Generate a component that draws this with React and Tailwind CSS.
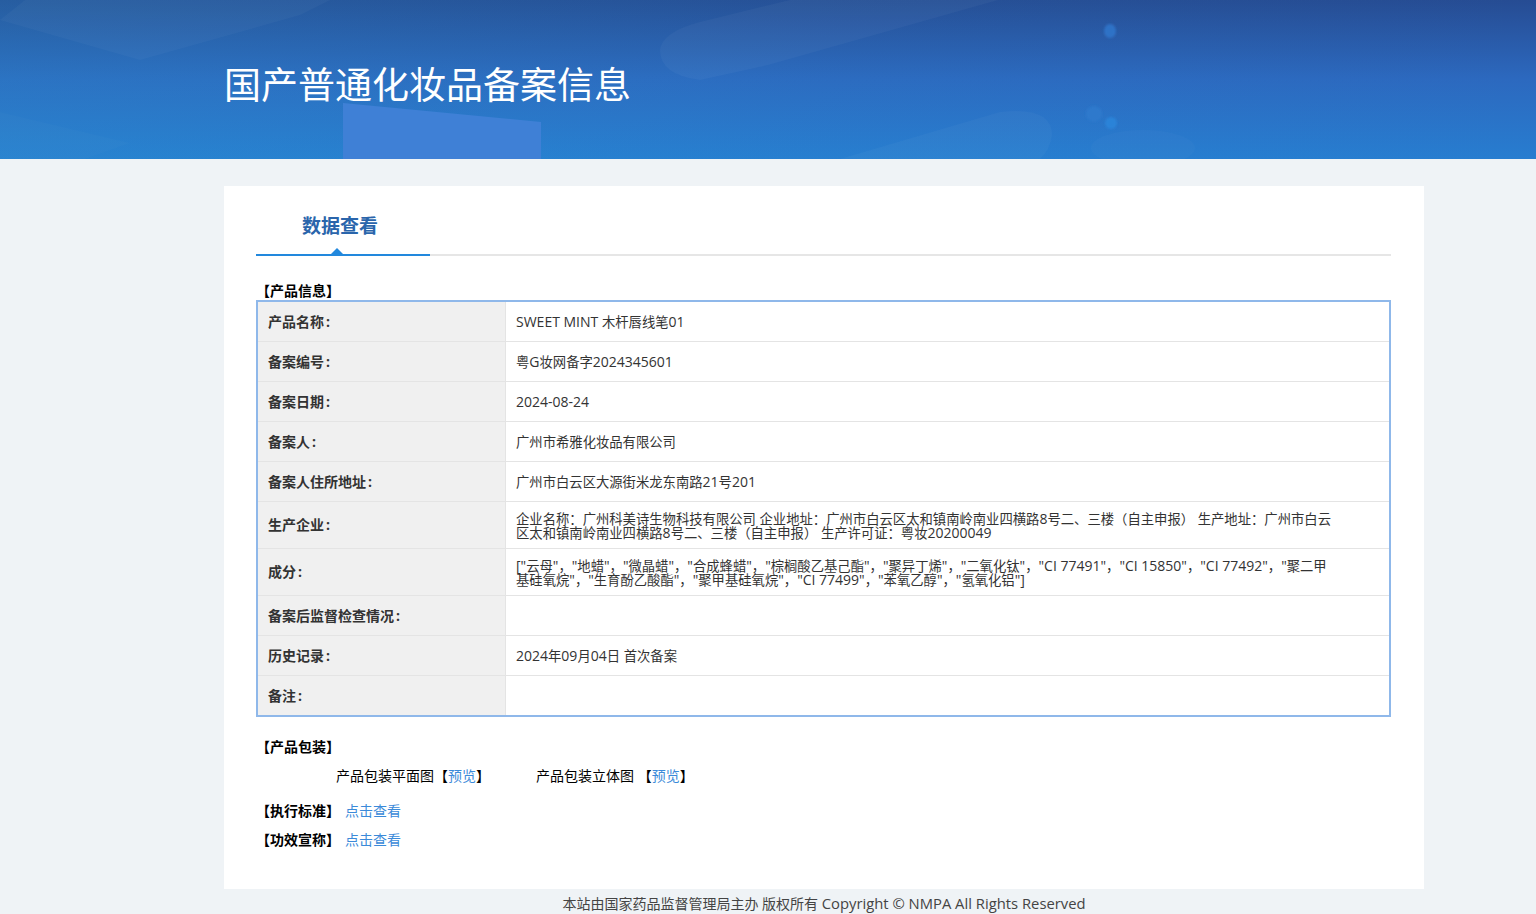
const ROWS = [
  { label: '产品名称', value: 'SWEET MINT 木杆唇线笔01' },
  { label: '备案编号', value: '粤G妆网备字2024345601' },
  { label: '备案日期', value: '2024-08-24' },
  { label: '备案人', value: '广州市希雅化妆品有限公司' },
  { label: '备案人住所地址', value: '广州市白云区大源街米龙东南路21号201' },
  {
    label: '生产企业',
    tall: true,
    value:
      '企业名称\uFF1A广州科美诗生物科技有限公司 企业地址\uFF1A广州市白云区太和镇南岭南业四横路8号二、三楼\uFF08自主申报\uFF09 生产地址\uFF1A广州市白云区太和镇南岭南业四横路8号二、三楼\uFF08自主申报\uFF09 生产许可证\uFF1A粤妆20200049',
  },
  {
    label: '成分',
    tall: true,
    value:
      '["云母"\uFF0C"地蜡"\uFF0C"微晶蜡"\uFF0C"合成蜂蜡"\uFF0C"棕榈酸乙基己酯"\uFF0C"聚异丁烯"\uFF0C"二氧化钛"\uFF0C"CI 77491"\uFF0C"CI 15850"\uFF0C"CI 77492"\uFF0C"聚二甲基硅氧烷"\uFF0C"生育酚乙酸酯"\uFF0C"聚甲基硅氧烷"\uFF0C"CI 77499"\uFF0C"苯氧乙醇"\uFF0C"氢氧化铝"]',
  },
  { label: '备案后监督检查情况', value: '' },
  { label: '历史记录', value: '2024年09月04日 首次备案' },
  { label: '备注', value: '' },
];

const FONT = "font-['Open_Sans','Noto_Sans_CJK_SC',sans-serif]";

// latin runs sit a little larger than the cjk ones in the original
const Mixed = ({ text }) =>
  text.split(/([\x20-\x7e]+)/).map((part, i) =>
    i % 2 ? (
      <span key={i} className="text-[14px]">
        {part}
      </span>
    ) : (
      part
    ),
  );

const BannerArt = () => (
  <svg className="absolute inset-0 h-full w-full" viewBox="0 0 1536 159" preserveAspectRatio="none" aria-hidden="true">
    <defs>
      <linearGradient id="leftGlow" x1="0" x2="1" y1="0" y2="0">
        <stop offset="0" stopColor="#2a9ad0" stopOpacity="0.22" />
        <stop offset="0.55" stopColor="#2a9ad0" stopOpacity="0.06" />
        <stop offset="1" stopColor="#2a9ad0" stopOpacity="0" />
      </linearGradient>
      <filter id="soft">
        <feGaussianBlur stdDeviation="1.2" />
      </filter>
    </defs>
    <rect width="1536" height="159" fill="url(#leftGlow)" />
    <path d="M0 20 L140 60 L300 15 L330 0 L25 0 Z" fill="#ffffff" fillOpacity="0.03" />
    <path d="M0 112 L130 143 L85 159 L0 159 Z" fill="#ffffff" fillOpacity="0.015" />
    <path d="M343 103 L541 122 L541 159 L343 159 Z" fill="#3f80d6" />
    <path d="M998 0 L768 65 L700 80 Q660 75 660 50 Q662 32 700 22 L790 0 Z" fill="#ffffff" fillOpacity="0.035" />
    <path d="M840 159 L1000 112 Q1052 106 1052 135 Q1050 150 1040 159 Z" fill="#ffffff" fillOpacity="0.03" />
    <ellipse cx="1143" cy="148" rx="52" ry="18" fill="#ffffff" fillOpacity="0.02" />
    <g filter="url(#soft)">
      <ellipse cx="1110" cy="31" rx="6" ry="7" fill="#2f72c6" />
      <ellipse cx="1094" cy="114" rx="8" ry="8" fill="#2d79cc" />
      <ellipse cx="1111" cy="123" rx="6" ry="6" fill="#2c83d8" />
    </g>
  </svg>
);

const Banner = () => (
  <header className="relative h-[159px] overflow-hidden bg-gradient-to-b from-[#264c93] via-[#2c69bf] to-[#277dd0]">
    <BannerArt />
    <h1 className="relative pl-[224px] pt-[60px] text-[37px] font-normal leading-[50px] text-white">
      国产普通化妆品备案信息
    </h1>
  </header>
);

const Tab = () => (
  <div className="h-[70px] border-b-2 border-[#e6e6e6]">
    <div className="relative flex h-[70px] w-[174px] justify-center border-b-2 border-[#2288dd] pr-[6px] pt-[25px]">
      <span className="text-[19px] font-bold leading-[30px] text-[#2a65ab]">数据查看</span>
      <span className="absolute bottom-0 left-[75px] h-0 w-0 border-x-[6px] border-b-[6px] border-x-transparent border-b-[#2288dd]" />
    </div>
  </div>
);

const InfoTable = () => (
  <div className="border-2 border-[#8fb8ea]">
    {ROWS.map((row, i) => {
      const last = i === ROWS.length - 1;
      return (
        <div
          key={row.label}
          className={`flex ${row.tall ? 'h-[47px]' : last ? 'h-[39px]' : 'h-10'} ${last ? '' : 'border-b border-[#e4e4e4]'}`}
        >
          <div className="flex w-[248px] shrink-0 items-center border-r border-[#e4e4e4] bg-[#f0f0f0] pl-[10px] text-sm font-bold text-[#333333]">
            {row.label}
            <span className="ml-[2px]">:</span>
          </div>
          <div className="min-w-0 flex-1 self-center pl-[10px] pr-[56px] pt-[1px] text-[13.33px] leading-[13px] text-[#333333]">
            <Mixed text={row.value} />
          </div>
        </div>
      );
    })}
  </div>
);

const Heading = ({ children }) => <span className="text-sm font-bold text-black">{children}</span>;

const LINK = 'text-[#3b8ad9]';

const App = () => (
  <div className={`min-h-[914px] bg-[#eff3f6] ${FONT}`}>
    <Banner />
    <main className="ml-[224px] mt-[27px] h-[703px] w-[1200px] bg-white pl-8 pr-[33px]">
      <Tab />
      <div className="h-[44px] pt-[23px] leading-[22px]">
        <Heading>【产品信息】</Heading>
      </div>
      <InfoTable />
      <div className="pt-[19px] leading-5">
        <Heading>【产品包装】</Heading>
      </div>
      <div className="flex pl-20 pt-[9px] text-sm leading-5 text-black">
        <span className="w-[200px]">
          产品包装平面图【<span className={LINK}>预览</span>】
        </span>
        <span>
          产品包装立体图 【<span className={LINK}>预览</span>】
        </span>
      </div>
      <div className="flex pt-[15px] leading-5">
        <Heading>【执行标准】</Heading>
        <span className={`ml-[5px] text-sm ${LINK}`}>点击查看</span>
      </div>
      <div className="flex pt-[9px] leading-5">
        <Heading>【功效宣称】</Heading>
        <span className={`ml-[5px] text-sm ${LINK}`}>点击查看</span>
      </div>
    </main>
    <footer className="ml-[224px] h-[25px] w-[1200px] pt-[4px] text-center text-sm leading-5 text-[#444444]">
      本站由国家药品监督管理局主办 版权所有 <span className="text-[14.8px]">Copyright © NMPA All Rights Reserved</span>
    </footer>
  </div>
);

export default App;
